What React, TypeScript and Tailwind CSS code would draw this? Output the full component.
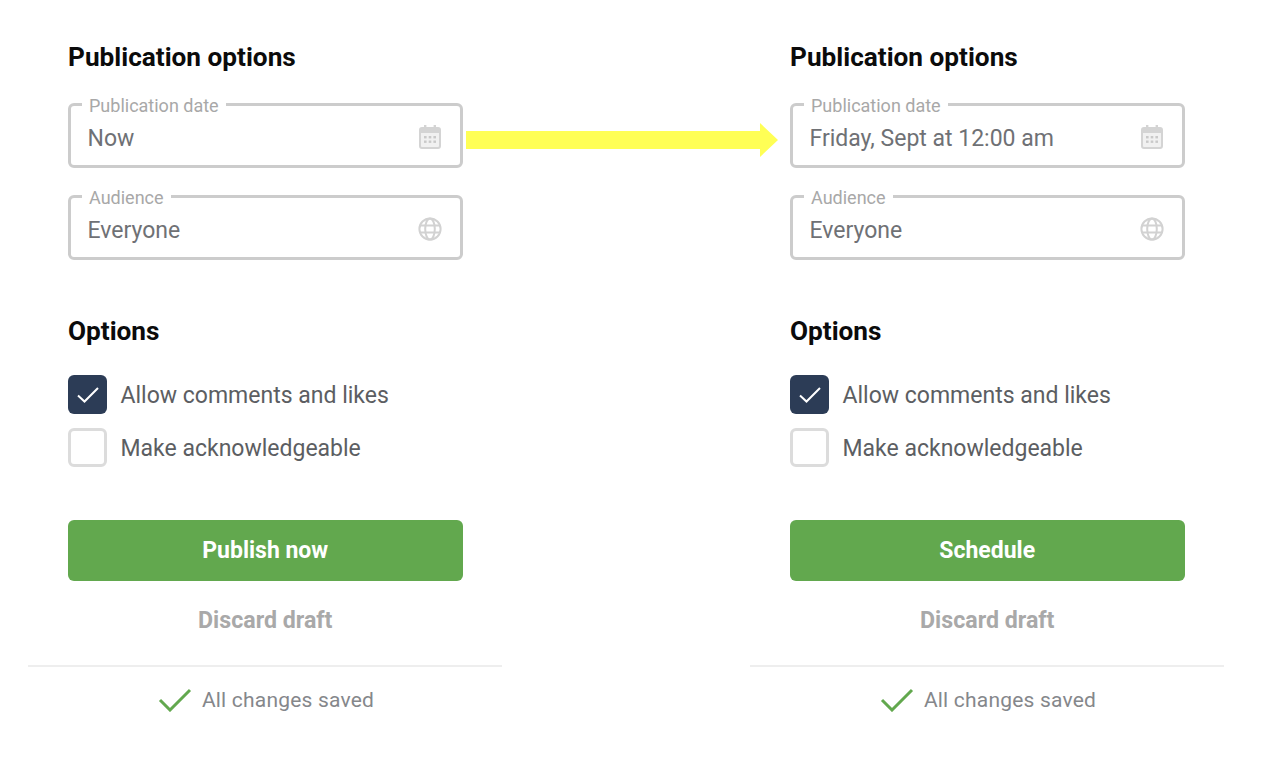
import React from "react";

function CalendarIcon() {
  return (
    <svg width="24" height="26" viewBox="0 0 24 26" className="shrink-0">
      <rect x="2" y="4" width="20" height="20" rx="2" fill="#f1f1f1" stroke="#d4d4d4" strokeWidth="2" />
      <rect x="2" y="4" width="20" height="5" fill="#d4d4d4" />
      <rect x="6" y="1" width="2.4" height="5" fill="#d4d4d4" />
      <rect x="15.6" y="1" width="2.4" height="5" fill="#d4d4d4" />
      <g fill="#c9c9c9">
        <rect x="6" y="12" width="2.6" height="2.4" />
        <rect x="10.7" y="12" width="2.6" height="2.4" />
        <rect x="15.4" y="12" width="2.6" height="2.4" />
        <rect x="6" y="16.5" width="2.6" height="2.4" />
        <rect x="10.7" y="16.5" width="2.6" height="2.4" />
        <rect x="15.4" y="16.5" width="2.6" height="2.4" />
      </g>
    </svg>
  );
}

function GlobeIcon() {
  return (
    <svg width="24" height="24" viewBox="0 0 24 24" fill="none" stroke="#d2d2d2" strokeWidth="2" className="shrink-0">
      <circle cx="12" cy="12" r="10.6" />
      <ellipse cx="12" cy="12" rx="4.8" ry="10.6" />
      <path d="M1.8 8.4h20.4M1.8 15.6h20.4" />
    </svg>
  );
}

function Field({ label, value, icon }: { label: string; value: string; icon: React.ReactNode }) {
  return (
    <fieldset className="h-[73.5px] border-[3px] border-[#cccccc] rounded-[6px] p-0 m-0 min-w-0">
      <legend className="ml-[11px] px-[7px] pt-[2px] text-[18px] leading-[19px] text-[#a8a8a8]">{label}</legend>
      <div className="flex items-center justify-between pl-[16.5px] pr-[18px] h-[40px] mt-[2px]">
        <span className="pt-[3px] text-[23px] leading-[30px] text-[#6f7175]">{value}</span>
        {icon}
      </div>
    </fieldset>
  );
}

function Check({ checked, label }: { checked?: boolean; label: string }) {
  return (
    <div className="flex items-center gap-[13.5px] h-[39px]">
      <div
        className={
          checked
            ? "w-[39px] h-[39px] rounded-[6px] bg-[#2c3c56] flex items-center justify-center"
            : "w-[39px] h-[39px] rounded-[6px] border-[3px] border-[#dcdcdc] bg-white"
        }
      >
        {checked && (
          <svg width="24" height="18" viewBox="0 0 24 18" fill="none" stroke="#ffffff" strokeWidth="2">
            <path d="M2 9.5l6.5 6L22 2" />
          </svg>
        )}
      </div>
      <span className="pt-[2px] text-[23px] leading-[30px] text-[#5c5e62]">{label}</span>
    </div>
  );
}

function Panel({ value, button }: { value: string; button: string }) {
  return (
    <div className="w-[474px] shrink-0">
      <div className="pl-[40px] pr-[39.5px]">
        <h2 className="text-[26.2px] leading-[30px] font-bold text-[#0b0b0b] pt-[42px]">Publication options</h2>
        <div className="mt-[22px] flex flex-col gap-[18.5px]">
          <Field label="Publication date" value={value} icon={<CalendarIcon />} />
          <Field label="Audience" value="Everyone" icon={<GlobeIcon />} />
        </div>
        <h2 className="text-[26.2px] leading-[30px] font-bold text-[#0b0b0b] mt-[56.5px]">Options</h2>
        <div className="mt-[29px] flex flex-col gap-[14px]">
          <Check checked label="Allow comments and likes" />
          <Check label="Make acknowledgeable" />
        </div>
        <button className="mt-[53px] w-full h-[61px] pt-[2px] rounded-[6px] bg-[#62a84e] text-white text-[23px] font-bold">
          {button}
        </button>
        <div className="mt-[25px] text-center text-[23.2px] leading-[28px] font-bold text-[#a9a9a9]">Discard draft</div>
      </div>
      <div className="mt-[31px] border-t-2 border-[#eeeeee] flex items-center justify-center gap-[10px] pt-[19px] pl-[2px]">
        <svg width="34" height="24" viewBox="0 0 34 24" fill="none" stroke="#62a84e" strokeWidth="3">
          <path d="M2 12l10 10L32 2" />
        </svg>
        <span className="text-[21px] leading-[28px] text-[#85878b] tracking-[0.2px]">All changes saved</span>
      </div>
    </div>
  );
}

export default function App() {
  return (
    <div className="relative w-[1264px] h-[778px] bg-white overflow-hidden font-['Roboto',sans-serif]">
      <div className="flex gap-[248px] pl-[28px]">
        <Panel value="Now" button="Publish now" />
        <Panel value="Friday, Sept at 12:00 am" button="Schedule" />
      </div>
      <svg className="absolute left-[466px] top-[123px]" width="312" height="34" viewBox="0 0 312 34">
        <path d="M0 8h294V0l18 17-18 17v-8H0z" fill="#ffff55" />
      </svg>
    </div>
  );
}
